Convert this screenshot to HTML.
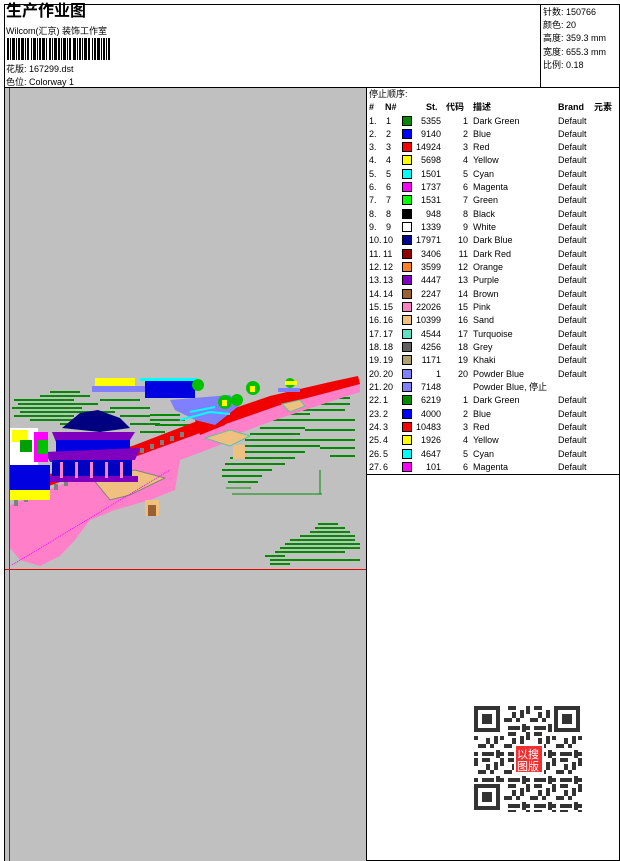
<!DOCTYPE html>
<html><head><meta charset="utf-8">
<style>
*{margin:0;padding:0;box-sizing:border-box}
body{width:620px;height:861px;background:#fff;position:relative;font-family:"Liberation Sans","Noto Sans CJK SC",sans-serif;font-size:9px;color:#000;overflow:hidden}
.abs{position:absolute}
.row{position:absolute;left:0;width:254px;height:13px;line-height:13px;white-space:nowrap}
.row span{position:absolute}
.sw{width:10px;height:10px;border:1px solid #000;top:1px;left:36px}
</style></head><body>
<div class="abs" style="left:4px;top:4px;width:616px;height:857px;border:1px solid #000"></div>
<div class="abs" style="left:4px;top:87px;width:363px;height:1px;background:#000"></div>
<div class="abs" style="left:540px;top:4px;width:1px;height:83px;background:#000"></div>
<div class="abs" style="left:366px;top:87px;width:1px;height:774px;background:#000"></div>
<div class="abs" style="left:366px;top:87px;width:254px;height:1px;background:#000"></div>
<div class="abs" style="left:366px;top:474px;width:254px;height:1px;background:#000"></div>

<div class="abs" style="left:6px;top:3px;font-size:16px;font-weight:bold;line-height:18px">生产作业图</div>
<div class="abs" style="left:6px;top:24px;font-size:9px">Wilcom(汇京) 装饰工作室</div>
<svg class="abs" style="left:7px;top:38px" width="104" height="22">
<g fill="#000">
<rect x="0" width="2" height="22"/><rect x="3" width="1" height="22"/><rect x="5" width="3" height="22"/><rect x="9" width="1" height="22"/><rect x="11" width="2" height="22"/><rect x="14" width="3" height="22"/><rect x="18" width="1" height="22"/><rect x="20" width="2" height="22"/><rect x="24" width="1" height="22"/><rect x="26" width="3" height="22"/><rect x="30" width="1" height="22"/><rect x="32" width="2" height="22"/><rect x="35" width="3" height="22"/><rect x="39" width="1" height="22"/><rect x="42" width="2" height="22"/><rect x="45" width="1" height="22"/><rect x="47" width="3" height="22"/><rect x="51" width="2" height="22"/><rect x="54" width="1" height="22"/><rect x="56" width="3" height="22"/><rect x="60" width="1" height="22"/><rect x="62" width="2" height="22"/><rect x="66" width="3" height="22"/><rect x="70" width="1" height="22"/><rect x="72" width="2" height="22"/><rect x="75" width="1" height="22"/><rect x="77" width="3" height="22"/><rect x="81" width="2" height="22"/><rect x="85" width="1" height="22"/><rect x="87" width="2" height="22"/><rect x="90" width="3" height="22"/><rect x="94" width="1" height="22"/><rect x="96" width="2" height="22"/><rect x="99" width="1" height="22"/><rect x="101" width="2" height="22"/>
</g></svg>
<div class="abs" style="left:6px;top:62px">花版: 167299.dst</div>
<div class="abs" style="left:6px;top:75px">色位: Colorway 1</div>
<div class="abs" style="left:543px;top:6px;line-height:13.2px">针数: 150766<br>颜色: 20<br>高度: 359.3 mm<br>宽度: 655.3 mm<br>比例: 0.18</div>

<div class="abs" style="left:5px;top:88px;width:361px;height:773px;background:#c0c0c0"></div>
<div class="abs" style="left:9px;top:88px;width:1px;height:773px;background:#e00000"></div>
<div class="abs" style="left:5px;top:569px;width:361px;height:1px;background:#e00000"></div>
<svg class="abs" style="left:0;top:0" width="366" height="570">
<g fill="none" stroke="#008a00" stroke-width="2">
<path d="M14 400h60M18 404h80M12 408h70M20 412h95M14 416h60M40 396h50M50 392h30M30 420h60M60 424h40M100 400h40M110 408h40M120 416h30M130 424h30M140 432h25M150 440h20"/>
<path d="M245 440h70M240 446h80M235 452h70M230 458h65M225 464h60M222 470h50M222 476h40M228 482h30M250 434h50M260 428h45M270 420h40M280 414h30M300 410h45M310 404h40M320 398h30M300 420h55M305 430h50M310 440h45M320 448h35M330 456h25"/>
<path d="M270 560h90M265 556h20M275 552h70M280 548h80M285 544h75M290 540h65M300 536h55M310 532h40M315 528h30M318 524h20M270 564h20"/>
<path d="M150 415h30M150 420h35M155 425h40M180 405h40M190 412h30M200 400h30"/>
</g>
<path d="M226 488h25M232 494h90M320 470v24" fill="none" stroke="#008a00" stroke-width="1"/>
<polygon fill="#ff80c8" points="10,505 60,485 135,455 200,430 270,402 320,388 360,378 360,392 320,405 275,420 240,433 220,445 180,460 175,490 150,500 115,510 90,520 75,540 60,556 40,566 20,560 10,548"/>
<polygon fill="#f00000" points="10,490 60,470 135,445 200,420 270,396 330,382 358,376 360,384 330,392 280,405 200,433 140,455 60,482 10,500"/>
<polygon fill="#f00000" points="195,420 220,410 225,425 200,435"/>
<g fill="#808080">
<rect x="14" y="500" width="4" height="6"/><rect x="24" y="496" width="4" height="6"/><rect x="34" y="492" width="4" height="6"/><rect x="44" y="488" width="4" height="6"/><rect x="54" y="484" width="4" height="6"/><rect x="64" y="480" width="4" height="6"/><rect x="74" y="476" width="4" height="6"/><rect x="84" y="472" width="4" height="6"/><rect x="140" y="448" width="4" height="5"/><rect x="150" y="444" width="4" height="5"/><rect x="160" y="440" width="4" height="5"/><rect x="170" y="436" width="4" height="5"/><rect x="180" y="432" width="4" height="5"/>
</g>
<polygon fill="#f0c080" stroke="#808080" points="92,478 135,470 165,478 130,495 110,500"/>
<rect x="145" y="500" width="14" height="16" fill="#f0c080"/><rect x="148" y="505" width="8" height="11" fill="#9a6030"/>
<polygon fill="#f0c080" stroke="#60c0a0" points="205,438 230,430 250,436 230,446"/>
<rect x="233" y="445" width="12" height="14" fill="#f0c080"/>
<polygon fill="#f0c080" stroke="#60c0a0" points="282,404 300,400 305,406 290,412"/>
<polygon fill="#000080" points="62,428 80,413 98,410 120,418 130,428 100,432"/>
<polygon fill="#8000c0" points="52,432 135,432 130,440 56,442"/>
<rect x="56" y="440" width="74" height="14" fill="#0000e0"/>
<polygon fill="#8000c0" points="45,452 140,448 135,460 50,462"/>
<rect x="52" y="460" width="80" height="20" fill="#0000c0"/>
<rect x="48" y="476" width="90" height="6" fill="#8000c0"/>
<g fill="#ff80c8"><rect x="60" y="462" width="3" height="16"/><rect x="75" y="462" width="3" height="16"/><rect x="90" y="462" width="3" height="16"/><rect x="105" y="462" width="3" height="16"/><rect x="120" y="462" width="3" height="16"/></g>
<rect x="10" y="428" width="28" height="70" fill="#fff"/>
<rect x="10" y="465" width="40" height="25" fill="#0000e0"/>
<rect x="10" y="490" width="40" height="10" fill="#ffff00"/>
<rect x="12" y="430" width="16" height="12" fill="#ffff00"/>
<rect x="20" y="440" width="12" height="12" fill="#00a000"/>
<rect x="34" y="432" width="14" height="30" fill="#ff00ff"/>
<rect x="38" y="440" width="10" height="14" fill="#00c000"/>
<rect x="95" y="378" width="40" height="10" fill="#ffff00"/>
<rect x="92" y="386" width="55" height="6" fill="#8080ff"/>
<rect x="145" y="380" width="50" height="18" fill="#0000e0"/>
<rect x="140" y="378" width="58" height="3" fill="#00ffff"/>
<polygon fill="#8080ff" points="170,400 230,395 240,405 215,425 195,420 175,410"/>
<path d="M180 420l30-8 20 2M190 412l25-5" stroke="#00ffff" stroke-width="2" fill="none"/>
<g fill="#00c000"><circle cx="225" cy="402" r="7"/><circle cx="237" cy="400" r="6"/><circle cx="253" cy="388" r="7"/><circle cx="290" cy="383" r="5"/><circle cx="198" cy="385" r="6"/></g>
<g fill="#ffff00"><rect x="222" y="400" width="5" height="6"/><rect x="250" y="386" width="5" height="6"/><rect x="285" y="381" width="12" height="4"/></g>
<rect x="278" y="388" width="22" height="4" fill="#8080ff"/>
<line x1="12" y1="565" x2="170" y2="470" stroke="#ff00ff" stroke-width="1" stroke-dasharray="1,1"/>
</svg>

<div class="abs" style="left:366px;top:88px;width:254px;height:386px">
<div class="row" style="top:0"><span style="left:3px">停止顺序:</span></div>
<div class="row" style="top:13px;font-weight:bold;text-decoration:underline"><span style="left:3px">#</span><span style="left:19px">N#</span><span style="left:60px">St.</span><span style="left:80px">代码</span><span style="left:107px">描述</span><span style="left:192px">Brand</span><span style="left:228px">元素</span></div>
<div id="rows"></div>
</div>
<script>
var d=[["1","5355","1","Dark Green","#008a00"],["2","9140","2","Blue","#0000ff"],["3","14924","3","Red","#ff0000"],["4","5698","4","Yellow","#ffff00"],["5","1501","5","Cyan","#00ffff"],["6","1737","6","Magenta","#ff00ff"],["7","1531","7","Green","#00ff00"],["8","948","8","Black","#000000"],["9","1339","9","White","#ffffff"],["10","17971","10","Dark Blue","#000090"],["11","3406","11","Dark Red","#900000"],["12","3599","12","Orange","#ff8020"],["13","4447","13","Purple","#8000c0"],["14","2247","14","Brown","#9a6030"],["15","22026","15","Pink","#ff80c0"],["16","10399","16","Sand","#f0c080"],["17","4544","17","Turquoise","#60e0c0"],["18","4256","18","Grey","#606060"],["19","1171","19","Khaki","#b0a070"],["20","1","20","Powder Blue","#8080ff"],["20","7148","","Powder  Blue, 停止","#8080ff"],["1","6219","1","Dark Green","#008a00"],["2","4000","2","Blue","#0000ff"],["3","10483","3","Red","#ff0000"],["4","1926","4","Yellow","#ffff00"],["5","4647","5","Cyan","#00ffff"],["6","101","6","Magenta","#ff00ff"]];
var h="";
for(var i=0;i<d.length;i++){var r=d[i],t=26.5+i*13.32;
h+='<div class="row" style="top:'+t+'px"><span style="left:3px">'+(i+1)+'.</span><span style="left:'+(i<9?20:17)+'px">'+r[0]+'</span><span class="sw" style="background:'+r[4]+'"></span><span style="right:179px">'+r[1]+'</span><span style="right:152px">'+r[2]+'</span><span style="left:107px">'+r[3]+'</span>'+(i==20?'':'<span style="left:192px">Default</span>')+'</div>';}
document.getElementById("rows").innerHTML=h;
</script>

<svg class="abs" style="left:474px;top:706px" width="108" height="106">
<defs><pattern id="q" width="26" height="26" patternUnits="userSpaceOnUse">
<g fill="#333"><rect x="0" y="0" width="4" height="8"/><rect x="8" y="0" width="8" height="4"/><rect x="20" y="4" width="4" height="8"/><rect x="4" y="12" width="8" height="4"/><rect x="16" y="12" width="4" height="4"/><rect x="0" y="20" width="4" height="4"/><rect x="8" y="20" width="12" height="4"/><rect x="12" y="6" width="4" height="6"/><rect x="22" y="18" width="4" height="8"/></g>
</pattern></defs>
<rect width="108" height="106" fill="url(#q)"/>
<g fill="#fff"><rect width="30" height="30"/><rect x="78" width="30" height="30"/><rect y="76" width="30" height="30"/></g>
<g fill="none" stroke="#333" stroke-width="4"><rect x="2" y="2" width="22" height="22"/><rect x="82" y="2" width="22" height="22"/><rect x="2" y="80" width="22" height="22"/></g>
<g fill="#333"><rect x="8" y="8" width="10" height="10"/><rect x="88" y="8" width="10" height="10"/><rect x="8" y="86" width="10" height="10"/></g>
<rect x="40" y="38" width="30" height="30" fill="#fff"/>
<rect x="42" y="40" width="26" height="26" fill="#f03030"/>
<text x="43" y="52" font-size="11" fill="#fff" font-family="Noto Sans CJK SC,sans-serif">以搜</text>
<text x="43" y="64" font-size="11" fill="#fff" font-family="Noto Sans CJK SC,sans-serif">图版</text>
</svg>
</body></html>
